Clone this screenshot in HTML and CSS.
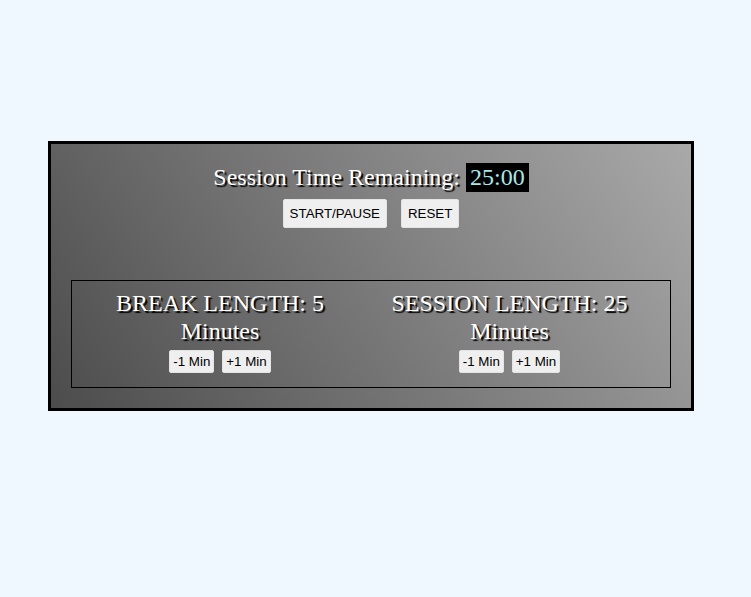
FILE: index.html
```html
<!DOCTYPE html>
<html>
<head>
<meta charset="utf-8">
<link rel="stylesheet" href="styles.css">
</head>
<body>
<div class="clock">
  <div class="title">Session Time Remaining: <span class="time">25:00</span></div>
  <div class="controls">
    <button class="btn btn-big">START/PAUSE</button>
    <button class="btn btn-big">RESET</button>
  </div>
  <div class="settings">
    <div class="setting">
      <div class="label">BREAK LENGTH: 5 Minutes</div>
      <div class="adjust">
        <button class="btn btn-small">-1 Min</button>
        <button class="btn btn-small">+1 Min</button>
      </div>
    </div>
    <div class="setting">
      <div class="label">SESSION LENGTH: 25 Minutes</div>
      <div class="adjust">
        <button class="btn btn-small">-1 Min</button>
        <button class="btn btn-small">+1 Min</button>
      </div>
    </div>
  </div>
</div>
</body>
</html>
```
FILE: styles.css
```css
html, body {
  margin: 0;
  padding: 0;
  background: #f0f8ff;
}
body {
  padding-top: 141px;
  padding-left: 48px;
}
.clock {
  box-sizing: border-box;
  width: 646px;
  height: 270px;
  border: 3px solid #000;
  background: linear-gradient(56deg, #4c4c4c, #a9a9a9);
  padding: 19px 20px 0 20px;
  font-family: "Liberation Serif", "Times New Roman", serif;
  color: #fff;
}
.title {
  font-size: 24px;
  line-height: 28px;
  text-align: center;
  text-shadow: 2px 2px 1px #000;
}
.time {
  background: #000;
  color: #a8e8e8;
  padding: 1px 4px 2px 4px;
  text-shadow: none;
}
.controls {
  display: flex;
  justify-content: center;
  gap: 14px;
  margin-top: 8px;
}
.btn {
  font-family: "Liberation Sans", Arial, sans-serif;
  font-size: 13.33px;
  line-height: 15px;
  color: #000;
  background: #efefef;
  border: 1px solid #e4e4e4;
  border-radius: 2px;
  margin: 0;
}
.btn-big {
  padding: 6px 6px;
}
.btn-small {
  padding: 3px 3px;
}
.settings {
  box-sizing: border-box;
  margin-top: 52px;
  border: 1px solid #000;
  height: 108px;
  padding: 9px 18px 0 0;
  display: grid;
  grid-template-columns: 296px 283px;
}
.setting {
  text-align: center;
}
.label {
  max-width: 260px;
  margin: 0 auto;
  font-size: 24px;
  line-height: 27.5px;
  text-shadow: 2px 2px 1px #000;
}
.adjust {
  display: flex;
  justify-content: center;
  gap: 8px;
  margin-top: 5px;
}
```
